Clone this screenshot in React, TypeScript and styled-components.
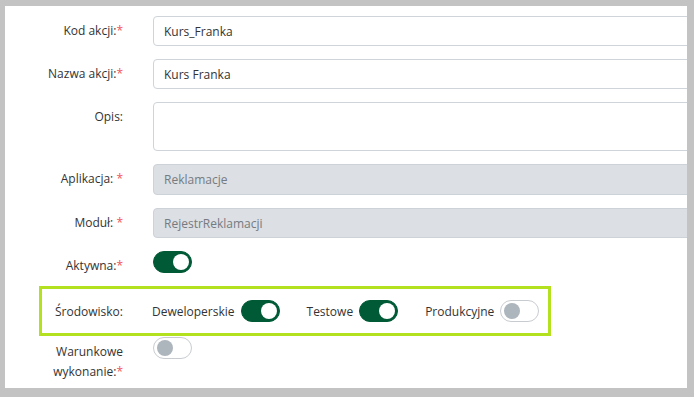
import * as React from "react";
import styled, { createGlobalStyle } from "styled-components";

const GlobalStyle = createGlobalStyle`
    html, body {
        margin: 0;
        padding: 0;
        background: #c3c3c3;
    }
    body {
        font-family: "Open Sans", "Liberation Sans", sans-serif;
        font-size: 12px;
        color: #333;
    }
`;

// styles
const Panel = styled.div`
    margin: 6px 7px 0 5px;
    height: 382px;
    background: #fff;
    overflow: hidden;
    padding-top: 10px;
    box-sizing: border-box;
`;

const Row = styled.div<{ $gap?: number }>`
    display: grid;
    grid-template-columns: 118px 1fr;
    column-gap: 30px;
    align-items: start;
    margin-bottom: ${(p) => (p.$gap ?? 13)}px;
`;

const Label = styled.label`
    text-align: right;
    line-height: 20px;
    padding-top: 5px;
    color: #333;
`;

const Req = styled.span`
    color: #f2545b;
`;

const Input = styled.div<{ $disabled?: boolean; $h?: number }>`
    width: calc(100% + 10px);
    height: ${(p) => p.$h ?? 30}px;
    box-sizing: border-box;
    border: 1px solid ${(p) => (p.$disabled ? "#cdd2d8" : "#ced4da")};
    border-radius: 4px;
    background: ${(p) => (p.$disabled ? "#dcdfe3" : "#fff")};
    color: ${(p) => (p.$disabled ? "#757b82" : "#333")};
    padding: 0 10px;
    display: flex;
    align-items: center;
`;

const Toggle = styled.span<{ $on?: boolean }>`
    position: relative;
    display: inline-block;
    flex: none;
    width: 39px;
    height: 22px;
    box-sizing: border-box;
    border-radius: 11px;
    border: 1px solid ${(p) => (p.$on ? "#005a36" : "#c8ccd1")};
    background: ${(p) => (p.$on ? "#005a36" : "#fff")};

    &::after {
        content: "";
        position: absolute;
        top: 2px;
        left: ${(p) => (p.$on ? "19px" : "3px")};
        width: 16px;
        height: 16px;
        border-radius: 50%;
        background: ${(p) => (p.$on ? "#fff" : "#adb5bd")};
    }
`;

const ToggleCell = styled.div`
    display: flex;
    align-items: center;
`;

const EnvBox = styled.div`
    display: flex;
    align-items: center;
    margin: 0 0 1px 34px;
    width: 512px;
    height: 50px;
    box-sizing: border-box;
    border: 3px solid #b4e11f;
    padding: 0 8px 0 0;
`;

const EnvLabel = styled.span`
    width: 81px;
    text-align: right;
    margin-right: 29px;
`;

const EnvItems = styled.div`
    display: flex;
    align-items: center;
    gap: 27px;
`;

const EnvItem = styled.div`
    display: flex;
    align-items: center;
    gap: 6px;
`;

// markup
const App = () => {
    return (
        <>
            <GlobalStyle />
            <Panel>
                <Row>
                    <Label>
                        Kod akcji:<Req>*</Req>
                    </Label>
                    <Input>Kurs_Franka</Input>
                </Row>
                <Row>
                    <Label>
                        Nazwa akcji:<Req>*</Req>
                    </Label>
                    <Input>Kurs Franka</Input>
                </Row>
                <Row>
                    <Label>Opis:</Label>
                    <Input $h={49} />
                </Row>
                <Row>
                    <Label>
                        Aplikacja: <Req>*</Req>
                    </Label>
                    <Input $disabled $h={31}>
                        Reklamacje
                    </Input>
                </Row>
                <Row>
                    <Label>
                        Moduł: <Req>*</Req>
                    </Label>
                    <Input $disabled>RejestrReklamacji</Input>
                </Row>
                <Row $gap={10}>
                    <Label>
                        Aktywna:<Req>*</Req>
                    </Label>
                    <ToggleCell>
                        <Toggle $on />
                    </ToggleCell>
                </Row>
                <EnvBox>
                    <EnvLabel>Środowisko:</EnvLabel>
                    <EnvItems>
                        <EnvItem>
                            Deweloperskie <Toggle $on />
                        </EnvItem>
                        <EnvItem>
                            Testowe <Toggle $on />
                        </EnvItem>
                        <EnvItem>
                            Produkcyjne <Toggle />
                        </EnvItem>
                    </EnvItems>
                </EnvBox>
                <Row>
                    <Label>
                        Warunkowe
                        <br />
                        wykonanie:<Req>*</Req>
                    </Label>
                    <ToggleCell>
                        <Toggle />
                    </ToggleCell>
                </Row>
            </Panel>
        </>
    );
};

export default App;
